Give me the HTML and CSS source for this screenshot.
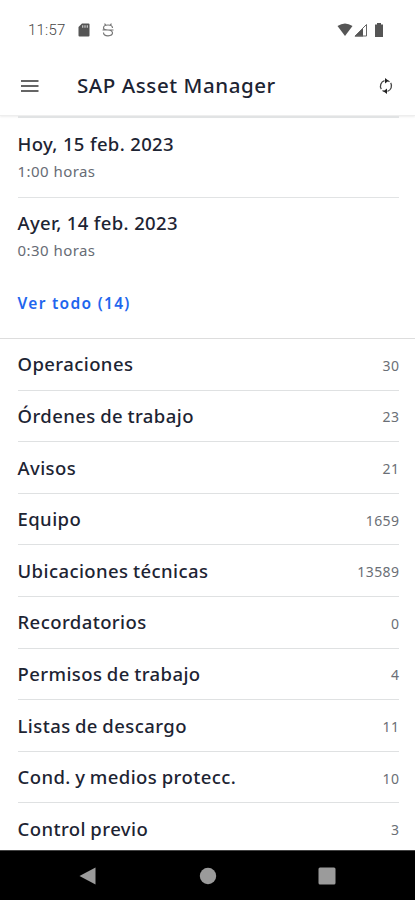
FILE: index.html
```html
<!DOCTYPE html>
<html lang="es">
<head>
<meta charset="utf-8">
<title>SAP Asset Manager</title>
<link rel="stylesheet" href="styles.css">
</head>
<body>
<div class="screen">
  <header class="top">
    <div class="status">
      <span class="clock">11:57</span>
      <svg class="sd" viewBox="0 0 12 14" width="12" height="14"><path d="M4 .5h6.500q1 0 1 1v11q0 1-1 1h-9q-1 0-1-1V4z" fill="#555"/><path d="M4.700 2.200v2.500M7 2.200v2.500M9.300 2.200v2.500" stroke="#ccc" stroke-width="1.200"/></svg>
      <svg class="debug" viewBox="0 0 12 14" width="12" height="14"><path d="M2.500.7l1.300 1.500M9.500.7L8.200 2.200M10.500 5Q10.500 2 6 2T1.500 5q0 2 4.500 2M.5 7h11M6 7q4.500.5 4.500 3T6 12.800Q1.500 12.800 1.500 9.500" fill="none" stroke="#777" stroke-width="1.200"/></svg>
      <span class="signals">
        <svg viewBox="0 0 16 14" width="16" height="14"><path d="M.5 3Q8-2 15.500 3L8 13z" fill="#555"/></svg>
        <svg class="cell" viewBox="0 0 14 14" width="14" height="14"><path d="M.5 13.500L9 5v8.500z" fill="#555"/><path d="M1 13L12.500 1.500V13z" fill="none" stroke="#666"/></svg>
        <svg class="battery" viewBox="0 0 10 14" width="10" height="14"><path d="M3 0h4v1.500h2V14H1V1.500h2z" fill="#555"/></svg>
      </span>
    </div>
    <div class="appbar">
      <svg class="menu" viewBox="0 0 18 14" width="18" height="14"><path d="M0 2h17.500M0 7h17.500M0 12h17.500" stroke="#333" stroke-width="1.500"/></svg>
      <h1>SAP Asset Manager</h1>
      <svg class="sync" viewBox="0 0 16 16" width="16" height="16"><g fill="none" stroke="#444" stroke-width="1.300"><path d="M3.300 11.200A5.700 5.700 0 0 1 6.500 2.700M8 2.400A5.700 5.700 0 0 1 11.500 3.700M12.700 4.900A5.700 5.700 0 0 1 9.500 13.300M8 13.600A5.700 5.700 0 0 1 4.500 12.400"/></g><path d="M7 0l3.500 2.700L7 5.400zM9 10.600V16l-3.500-2.700z" fill="#222"/></svg>
    </div>
  </header>
  <main>
    <section class="times">
      <div class="entry"><h2>Hoy, 15 feb. 2023</h2><p>1:00 horas</p></div>
      <div class="entry"><h2>Ayer, 14 feb. 2023</h2><p>0:30 horas</p></div>
      <a class="all">Ver todo (14)</a>
    </section>
    <ul class="list">
      <li><span>Operaciones</span><b>30</b></li>
      <li><span>Órdenes de trabajo</span><b>23</b></li>
      <li><span>Avisos</span><b>21</b></li>
      <li><span>Equipo</span><b>1659</b></li>
      <li><span>Ubicaciones técnicas</span><b>13589</b></li>
      <li><span>Recordatorios</span><b>0</b></li>
      <li><span>Permisos de trabajo</span><b>4</b></li>
      <li><span>Listas de descargo</span><b>11</b></li>
      <li><span>Cond. y medios protecc.</span><b>10</b></li>
      <li><span>Control previo</span><b>3</b></li>
    </ul>
  </main>
  <nav class="navbar">
    <svg viewBox="0 0 18 18" width="18" height="18"><path d="M16.500.5v17L.5 9z" fill="#9b9b9b"/></svg>
    <svg viewBox="0 0 18 18" width="18" height="18"><circle cx="9" cy="9" r="8.200" fill="#9b9b9b"/></svg>
    <svg viewBox="0 0 18 18" width="18" height="18"><rect x=".5" y=".5" width="17" height="17" rx="1.500" fill="#9b9b9b"/></svg>
  </nav>
</div>
</body>
</html>
```
FILE: styles.css
```css
* { box-sizing: border-box; margin: 0; padding: 0; }
body { background: #fff; font-family: "Noto Sans", sans-serif; color: #1d2433; }
.screen { height: 900px; display: flex; flex-direction: column; overflow: hidden; }
svg { display: block; flex: none; }
.top { height: 116px; flex: none; border-bottom: 1px solid #eee; box-shadow: 0 1px 2px #eee; }
.status { height: 60px; display: flex; align-items: center; padding: 0 31px 0 28px; }
.clock { width: 50px; font: 300 15px Roboto, sans-serif; letter-spacing: .2px; color: #444; }
.debug { margin-left: 12px; }
.signals { margin-left: auto; display: flex; }
.cell { margin-left: 1px; }
.battery { margin-left: 6px; }
.appbar { height: 52px; display: flex; align-items: center; padding: 0 21px; }
.appbar h1 { margin-left: 38px; padding-bottom: 2px; font-size: 20.5px; font-weight: 550; line-height: 28px; letter-spacing: .57px; }
.sync { margin-left: auto; }
main { flex: none; height: 734px; overflow: hidden; }
.times { height: 223px; border-bottom: 1px solid #ddd; padding: 0 16px 0 17.5px; }
.entry { height: 80px; border-top: 2px solid #e1e3e4; padding-top: 13px; }
.entry + .entry { height: 79px; border-top-width: 1px; margin-top: 1px; padding-top: 12px; }
.entry h2 { font-size: 18.5px; font-weight: 550; line-height: 26px; letter-spacing: .35px; }
.entry p { font-size: 15px; line-height: 20px; margin-top: 4px; color: #676c75; font-weight: 400; letter-spacing: .45px; }
.all { display: block; margin-top: 16px; font-size: 15.5px; line-height: 22px; font-weight: 600; letter-spacing: 1.3px; color: #1f66ee; }
.list { list-style: none; padding: 0 16px 0 17.5px; }
.list li { height: 51.6px; border-bottom: 1px solid #dfe1e2; display: flex; justify-content: space-between; align-items: center; padding-bottom: .8px; font-size: 18.5px; font-weight: 550; letter-spacing: .42px; word-spacing: -.8px; }
.list b { font-size: 14px; font-weight: 400; color: #6b6f76; padding-top: 3px; letter-spacing: .4px; margin-right: -.4px; }
.navbar { height: 50px; flex: none; background: #000; display: flex; justify-content: space-between; align-items: center; padding: 0 79px; border-top: 1px solid #444; }
```
